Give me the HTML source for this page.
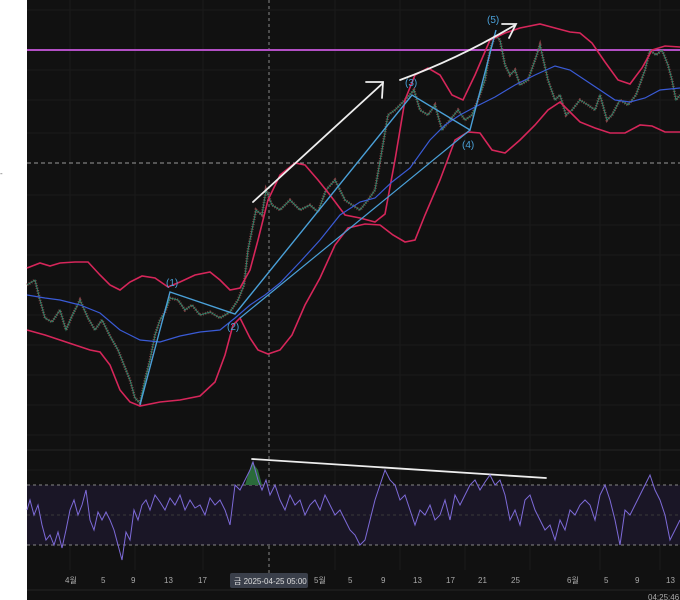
<!DOCTYPE html>
<html><head><meta charset="utf-8"><style>
html,body{margin:0;padding:0;background:#fff;}
svg{display:block;font-family:"Liberation Sans","Noto Sans CJK KR",sans-serif;}
</style></head><body>
<svg width="680" height="600" viewBox="0 0 680 600" xmlns="http://www.w3.org/2000/svg">
<rect x="0" y="0" width="680" height="600" fill="#fff"/>
<rect x="27" y="0" width="653" height="600" fill="#111111"/>
<text x="0" y="176" font-size="8" fill="#666">-</text>
<g stroke="#1b1b1b" stroke-width="1">
<line x1="27" y1="10" x2="680" y2="10"/><line x1="27" y1="70" x2="680" y2="70"/><line x1="27" y1="100" x2="680" y2="100"/><line x1="27" y1="133" x2="680" y2="133"/><line x1="27" y1="195" x2="680" y2="195"/><line x1="27" y1="225" x2="680" y2="225"/><line x1="27" y1="255" x2="680" y2="255"/><line x1="27" y1="285" x2="680" y2="285"/><line x1="27" y1="315" x2="680" y2="315"/><line x1="27" y1="345" x2="680" y2="345"/><line x1="27" y1="375" x2="680" y2="375"/><line x1="27" y1="405" x2="680" y2="405"/><line x1="27" y1="435" x2="680" y2="435"/><line x1="27" y1="470" x2="680" y2="470"/>
<line x1="70" y1="0" x2="70" y2="570"/><line x1="135" y1="0" x2="135" y2="570"/><line x1="203" y1="0" x2="203" y2="570"/><line x1="335" y1="0" x2="335" y2="570"/><line x1="400" y1="0" x2="400" y2="570"/><line x1="465" y1="0" x2="465" y2="570"/><line x1="530" y1="0" x2="530" y2="570"/><line x1="600" y1="0" x2="600" y2="570"/><line x1="660" y1="0" x2="660" y2="570"/>
</g>
<line x1="27" y1="450" x2="680" y2="450" stroke="#252525"/>
<line x1="27" y1="590" x2="680" y2="590" stroke="#252525"/>
<line x1="269" y1="0" x2="269" y2="575" stroke="#888" stroke-dasharray="3,3"/>
<line x1="27" y1="163" x2="680" y2="163" stroke="#999" stroke-dasharray="4,3"/>
<line x1="27" y1="50" x2="680" y2="50" stroke="#b24fc4" stroke-width="2"/>
<!-- price (candle-ish) -->
<polyline fill="none" stroke="#a0474f" stroke-width="3" stroke-dasharray="1,1.5" opacity="0.8" points="27,285 35,280 40,300 45,318 52,322 60,310 66,330 72,316 80,300 88,318 95,330 102,320 110,336 118,350 124,365 130,380 135,398 140,403 145,380 150,360 155,335 160,320 165,312 170,298 178,300 185,310 192,305 200,315 210,312 220,318 230,312 238,300 244,285 248,250 252,230 256,210 262,215 266,190 272,205 280,210 290,200 300,210 310,205 318,212 326,190 335,180 345,200 352,205 360,210 368,200 375,190 382,150 388,115 395,110 405,100 414,90 420,110 428,115 435,105 442,130 450,120 458,110 465,120 472,115 478,100 485,80 490,50 495,35 500,40 505,65 510,75 515,70 520,85 528,80 535,60 540,45 548,80 555,100 560,95 566,115 572,110 580,100 588,105 595,110 600,95 607,120 612,115 620,100 628,105 636,95 645,70 650,50 656,55 662,50 668,65 672,80 676,100 680,95"/>
<polyline fill="none" stroke="#2a9c7a" stroke-width="1" opacity="0.8" points="27,285 35,280 40,300 45,318 52,322 60,310 66,330 72,316 80,300 88,318 95,330 102,320 110,336 118,350 124,365 130,380 135,398 140,403 145,380 150,360 155,335 160,320 165,312 170,298 178,300 185,310 192,305 200,315 210,312 220,318 230,312 238,300 244,285 248,250 252,230 256,210 262,215 266,190 272,205 280,210 290,200 300,210 310,205 318,212 326,190 335,180 345,200 352,205 360,210 368,200 375,190 382,150 388,115 395,110 405,100 414,90 420,110 428,115 435,105 442,130 450,120 458,110 465,120 472,115 478,100 485,80 490,50 495,35 500,40 505,65 510,75 515,70 520,85 528,80 535,60 540,45 548,80 555,100 560,95 566,115 572,110 580,100 588,105 595,110 600,95 607,120 612,115 620,100 628,105 636,95 645,70 650,50 656,55 662,50 668,65 672,80 676,100 680,95"/>
<!-- BB -->
<polyline fill="none" stroke="#d6265a" stroke-width="1.6" points="27,268 40,263 50,266 60,263 75,262 88,262 100,275 110,285 120,290 130,282 142,276 155,278 168,287 180,282 195,275 210,272 220,280 230,290 240,288 250,270 258,240 268,200 280,175 295,163 305,165 318,180 330,195 345,215 360,218 375,222 385,214 395,160 405,100 415,75 428,68 440,75 452,95 463,100 475,75 490,40 505,33 520,28 540,24 555,28 570,32 580,33 592,43 605,62 618,80 630,84 642,68 652,50 665,46 680,47"/>
<polyline fill="none" stroke="#d6265a" stroke-width="1.6" points="27,330 45,335 60,340 75,345 90,350 100,352 110,365 120,390 130,402 140,406 160,402 180,400 200,396 215,382 225,355 233,325 240,318 250,338 258,350 268,354 280,350 292,335 305,305 320,278 335,245 348,228 365,224 380,225 393,235 405,242 415,240 425,215 440,180 455,140 468,132 480,133 492,150 505,153 520,140 535,125 548,110 560,102 570,112 580,122 595,128 610,133 625,133 640,125 652,126 665,132 680,132"/>
<polyline fill="none" stroke="#3a5bd6" stroke-width="1.2" points="27,295 45,298 60,300 80,305 100,313 120,330 140,340 160,342 180,336 200,332 220,330 235,318 250,305 265,295 280,283 300,262 320,240 340,215 360,202 375,198 392,182 410,168 430,140 445,125 460,115 475,107 495,97 515,85 535,75 555,66 570,70 585,80 600,90 615,100 630,102 645,98 660,90 680,88"/>
<!-- waves -->
<polyline fill="none" stroke="#4aa0d8" stroke-width="1.4" points="140,405 170,292 235,314 412,95 470,130 496,30"/>
<line x1="240" y1="318" x2="470" y2="130" stroke="#4aa0d8" stroke-width="1.2"/>
<g fill="#4aa0d8" font-size="10"><text x="166" y="286">(1)</text><text x="227" y="330">(2)</text><text x="405" y="86">(3)</text><text x="462" y="148">(4)</text><text x="487" y="23">(5)</text></g>
<!-- white arrows -->
<g fill="none" stroke="#eee" stroke-width="1.8" stroke-linecap="round">
<path d="M253,202 L383,83"/><path d="M366,82 L383,82 L382,98"/>
<path d="M400,80 Q460,58 515,25"/><path d="M502,24 L516,24 L509,38"/>
<line x1="252" y1="459" x2="546" y2="478"/>
</g>
<!-- RSI -->
<rect x="27" y="485" width="653" height="60" fill="#1a1626"/>
<line x1="27" y1="485" x2="680" y2="485" stroke="#888" stroke-dasharray="3,3"/>
<line x1="27" y1="515" x2="680" y2="515" stroke="#3a3a3a" stroke-dasharray="3,3"/>
<line x1="27" y1="545" x2="680" y2="545" stroke="#888" stroke-dasharray="3,3"/>
<polygon points="238,485 245,485 252,462 258,470 262,485" fill="#2a6a3a"/>
<polyline fill="none" stroke="#7d6ad8" stroke-width="1" points="27,510 30,500 34,515 38,505 42,525 46,540 50,535 54,545 58,532 62,548 66,530 70,510 74,500 78,515 82,505 86,490 90,520 94,530 98,512 102,520 106,512 110,520 114,530 118,545 122,560 126,532 130,540 134,510 138,520 142,505 146,500 150,510 155,495 160,502 165,510 170,498 175,505 180,495 185,510 190,500 195,508 200,505 205,515 210,498 215,505 220,500 225,510 230,525 235,485 240,490 245,480 250,470 253,462 258,480 262,490 266,480 270,495 275,485 280,500 285,510 290,495 295,505 300,500 305,515 310,505 315,500 320,510 325,495 330,505 335,515 340,510 345,520 350,530 355,535 360,545 365,540 370,520 375,500 380,485 385,470 390,480 395,485 400,500 405,495 410,510 415,525 420,510 425,515 430,505 435,520 440,515 445,500 450,520 455,495 460,505 465,495 470,485 475,480 480,490 485,482 490,475 495,485 500,480 505,495 510,520 515,510 520,525 525,500 530,495 535,510 540,520 545,530 550,525 555,540 560,520 565,530 570,510 575,515 580,505 585,500 590,505 595,520 600,495 605,485 610,500 615,520 620,545 625,510 630,515 635,505 640,495 645,485 650,475 655,490 660,500 665,515 670,540 675,530 680,520"/>
<!-- axis -->
<g fill="#aaa" font-size="8">
<text x="65" y="583">4월</text><text x="101" y="583">5</text><text x="131" y="583">9</text><text x="164" y="583">13</text><text x="198" y="583">17</text><text x="314" y="583">5월</text><text x="348" y="583">5</text><text x="381" y="583">9</text><text x="413" y="583">13</text><text x="446" y="583">17</text><text x="478" y="583">21</text><text x="511" y="583">25</text><text x="567" y="583">6월</text><text x="604" y="583">5</text><text x="635" y="583">9</text><text x="666" y="583">13</text>
</g>
<rect x="230" y="573" width="78" height="15" rx="2" fill="#3a3f4a"/>
<text x="234" y="584" font-size="8" fill="#ddd">금 2025-04-25   05:00</text>
<text x="648" y="600" font-size="8" fill="#aaa">04:25:46</text>
</svg>
</body></html>
